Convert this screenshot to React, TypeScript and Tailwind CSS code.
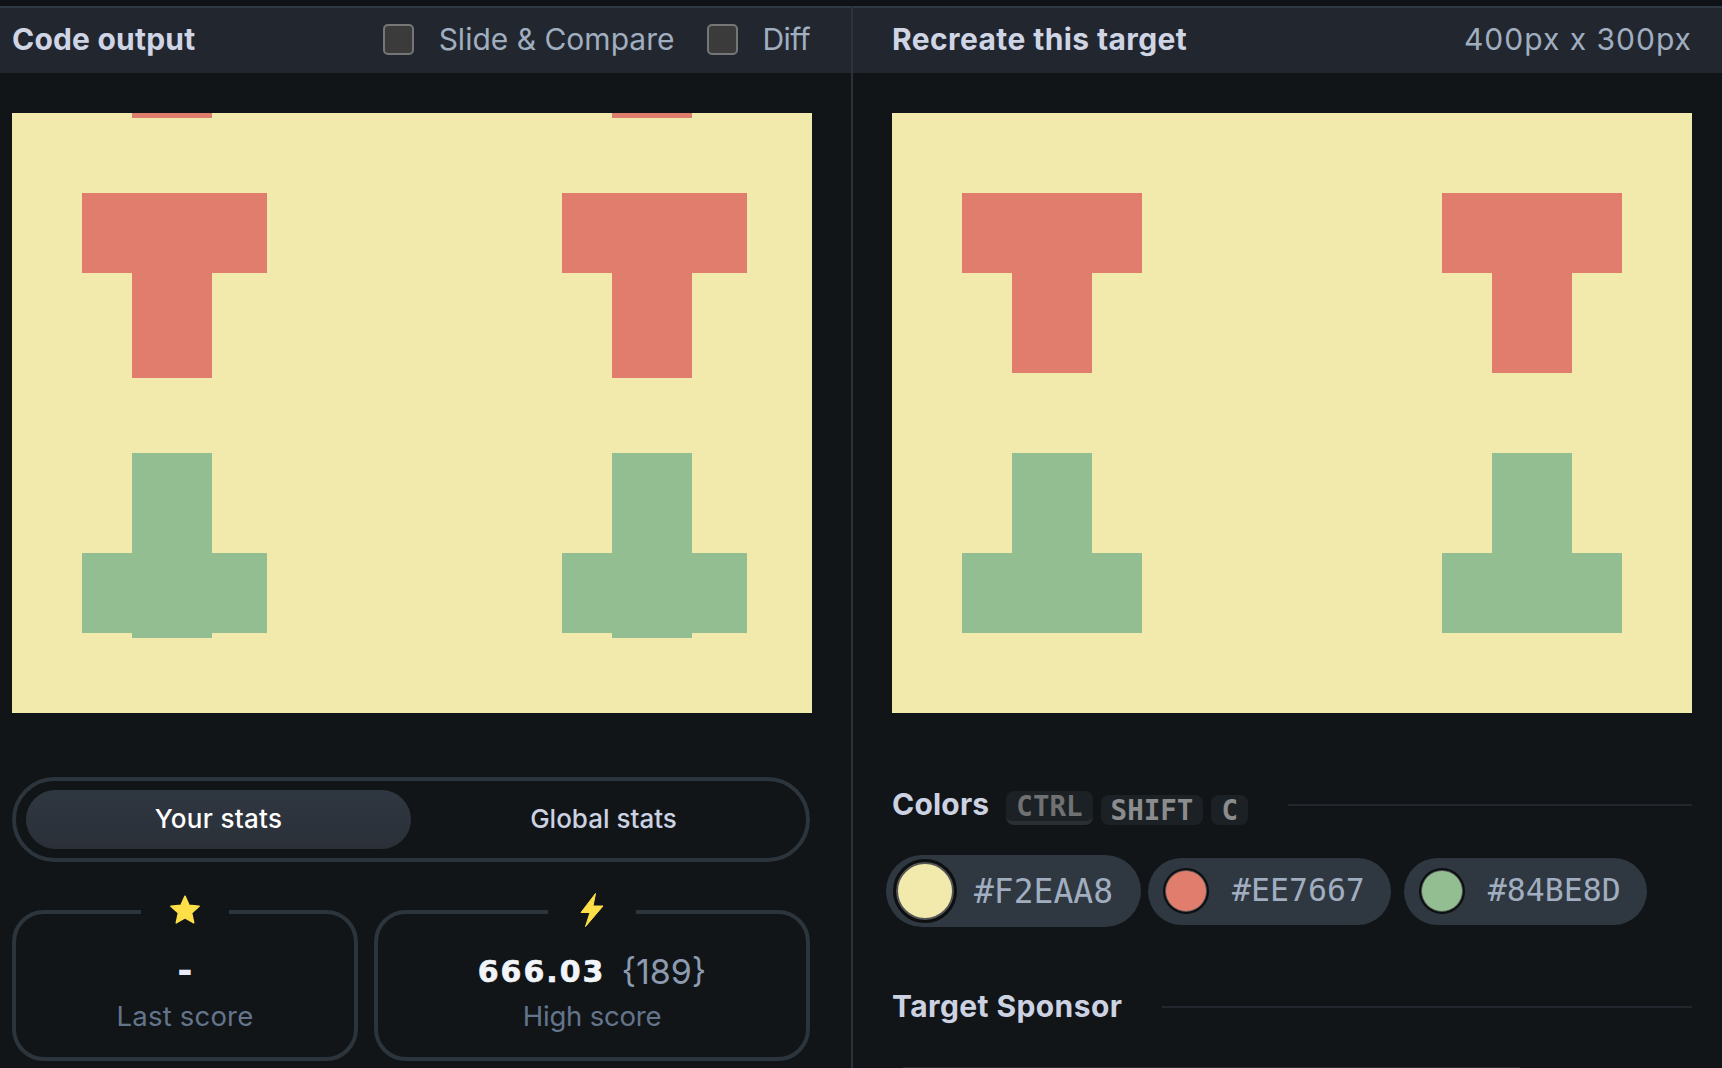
function OutputCanvas() {
  return (
    <svg width="800" height="600" viewBox="0 0 800 600" className="block bg-[#f1eaac]">
      {[0, 480].map((dx) => (
        <g key={dx} transform={`translate(${dx} 0)`}>
          <rect x="120" y="0" width="80" height="5" fill="#e07d6c" />
          <rect x="70" y="80" width="185" height="80" fill="#e07d6c" />
          <rect x="120" y="160" width="80" height="105" fill="#e07d6c" />
          <rect x="120" y="340" width="80" height="185" fill="#93be91" />
          <rect x="70" y="440" width="185" height="80" fill="#93be91" />
        </g>
      ))}
    </svg>
  );
}

function TargetCanvas() {
  return (
    <svg width="800" height="600" viewBox="0 0 800 600" className="block bg-[#f1eaac]">
      {[0, 480].map((dx) => (
        <g key={dx} transform={`translate(${dx} 0)`}>
          <rect x="70" y="80" width="180" height="80" fill="#e07d6c" />
          <rect x="120" y="160" width="80" height="100" fill="#e07d6c" />
          <rect x="120" y="340" width="80" height="110" fill="#93be91" />
          <rect x="70" y="440" width="180" height="80" fill="#93be91" />
        </g>
      ))}
    </svg>
  );
}

function Check() {
  return <div className="h-[31px] w-[31px] rounded-[5px] border-2 border-[#767676] bg-[#3b3b3b]" />;
}

function ScoreCard({ className, icon, children, label }: { className: string; icon: React.ReactNode; children: React.ReactNode; label: React.ReactNode }) {
  return (
    <div className={`relative flex h-[151px] flex-col items-center rounded-[32px] border-4 border-[#2c343c] pt-[41px] ${className}`}>
      <div className="absolute -top-[20px] left-1/2 flex h-[32px] w-[88px] -translate-x-1/2 items-center justify-center bg-[#111518]">
        {icon}
      </div>
      <div className="flex h-[32px] items-center">{children}</div>
      <div className="mt-[11px] text-[27.5px] leading-[36px] tracking-[0.2px] text-[#64748b]">{label}</div>
    </div>
  );
}

function Kbd({ children, className }: { children: string; className: string }) {
  return (
    <span className={`rounded-[8px] bg-[#1c2125] px-[10px] font-['DejaVu_Sans_Mono',monospace] text-[27.5px] leading-[30px] font-bold ${className}`}>
      {children}
    </span>
  );
}

function ColorChip({ hex, color }: { hex: string; color: string }) {
  return (
    <div className="flex h-[67px] items-center gap-[25px] rounded-full bg-[#2f3740] pr-[26px] pl-[17px]">
      <div className="h-[42px] w-[42px] rounded-full border-[1.5px] border-[#555] outline-2 outline-[#0d0f11]" style={{ backgroundColor: color }} />
      <span className="font-['DejaVu_Sans_Mono',monospace] text-[31.5px] leading-none text-[#a0aec0]">{hex}</span>
    </div>
  );
}

export default function App() {
  return (
    <div className="flex h-[1068px] w-[1722px] flex-col overflow-hidden bg-[#111518] font-['Inter',sans-serif]">
      <div className="h-[6px] bg-[#0f1217]" />
      <div className="flex flex-1">
        {/* left panel */}
        <div className="w-[853px] border-r-2 border-[#2a323a]">
          <div className="flex h-[67px] items-center border-t-2 border-[#2f3a45] bg-[#22272f] pr-[41px] pb-[2px] pl-[12px]">
            <h2 className="text-[30px] font-bold tracking-[0.2px] text-[#d0d5e5]">Code output</h2>
            <div className="ml-auto flex items-center">
              <Check />
              <span className="mr-[33px] ml-[25px] text-[30px] text-[#a0aec0]">Slide &amp; Compare</span>
              <Check />
              <span className="ml-[24px] text-[30px] tracking-[-0.6px] text-[#a0aec0]">Diff</span>
            </div>
          </div>
          <div className="pt-[40px] pl-[12px]">
            <OutputCanvas />
          </div>
          <div className="mt-[64px] ml-[12px] flex h-[85px] w-[798px] items-center rounded-full border-4 border-[#2c343c] px-[10px]">
            <div className="flex h-[59px] w-[385px] items-center justify-center rounded-full bg-gradient-to-b from-[#2f3741] to-[#2b3038] pb-[2px] text-[26px] font-medium tracking-[0.3px] text-white">
              Your stats
            </div>
            <div className="flex-1 pb-[2px] text-center text-[26px] font-medium text-[#ccd2e2]">Global stats</div>
          </div>
          <div className="mt-[48px] ml-[12px] flex w-[798px] gap-[16px]">
            <ScoreCard
              className="w-[346px]"
              label="Last score"
              icon={
                <svg width="34" height="34" viewBox="0 0 24 24" fill="#fde047">
                  <path d="M12 2.2l2.9 6.5 7.1.7-5.3 4.7 1.5 7-6.2-3.6-6.2 3.6 1.5-7L2 9.4l7.1-.7z" stroke="#fde047" strokeLinejoin="round" />
                </svg>
              }
            >
              <span className="font-['DejaVu_Sans',sans-serif] text-[37px] font-bold text-[#e8ecf8]">-</span>
            </ScoreCard>
            <ScoreCard
              className="flex-1"
              label={<span className="tracking-[-0.2px]">High score</span>}
              icon={
                <svg width="24" height="34" viewBox="0 0 24 34" fill="#fde047">
                  <path d="M15.5 0.5L1 19.5h9L5.5 33.5 23 13h-10z" stroke="#fde047" strokeLinejoin="round" />
                </svg>
              }
            >
              <span className="font-['DejaVu_Sans',sans-serif] text-[30px] font-bold tracking-[2px] text-[#f1f5f9] [-webkit-text-stroke:0.6px_#f1f5f9]">666.03</span>
              <span className="ml-[16px] text-[34px] text-[#8c9bb0]">{"{189}"}</span>
            </ScoreCard>
          </div>
        </div>

        {/* right panel */}
        <div className="flex-1">
          <div className="flex h-[67px] items-center justify-between border-t-2 border-[#2f3a45] bg-[#22272f] pr-[30px] pb-[2px] pl-[39px]">
            <h2 className="text-[30px] font-bold tracking-[0.4px] text-[#d0d5e5]">Recreate this target</h2>
            <span className="text-[30px] tracking-[1px] text-[#a0aec0]">400px x 300px</span>
          </div>
          <div className="pt-[40px] pl-[39px]">
            <TargetCanvas />
          </div>
          <div className="mt-[69px] flex h-[45px] items-center pr-[30px] pl-[39px]">
            <h3 className="text-[30px] font-bold tracking-[0.2px] text-[#ccd2e2]">Colors</h3>
            <div className="mt-[10px] ml-[17px] flex items-start gap-[8px]">
              <Kbd className="-mt-[4px] border-b-4 border-[#2a2f34] text-[#6f7173]">CTRL</Kbd>
              <Kbd className="text-[#8a8c8e]">SHIFT</Kbd>
              <Kbd className="text-[#8a8c8e]">C</Kbd>
            </div>
            <div className="ml-[40px] h-[2px] flex-1 bg-[#22272e]" />
          </div>
          <div className="mt-[28px] ml-[33px] flex items-center gap-[13px]">
            <div className="-mr-[6px] flex h-[72px] items-center gap-[20px] rounded-full bg-[#2f3740] pr-[28px] pl-[10px]">
              <div className="h-[58px] w-[58px] rounded-full border-2 border-[#555] bg-[#f1eaac] outline-[3px] outline-[#0d0f11]" />
              <span className="font-['DejaVu_Sans_Mono',monospace] text-[33px] leading-none text-[#a0aec0]">#F2EAA8</span>
            </div>
            <ColorChip hex="#EE7667" color="#e07d6c" />
            <ColorChip hex="#84BE8D" color="#93be91" />
          </div>
          <div className="mt-[57px] flex h-[45px] items-center pr-[30px] pl-[39px]">
            <h3 className="text-[30px] font-bold tracking-[0.4px] text-[#ccd2e2]">Target Sponsor</h3>
            <div className="ml-[40px] h-[2px] flex-1 bg-[#22272e]" />
          </div>
          <div className="mt-[38px] ml-[50px] h-px w-[617px] bg-[#2c2e30]" />
        </div>
      </div>
    </div>
  );
}
